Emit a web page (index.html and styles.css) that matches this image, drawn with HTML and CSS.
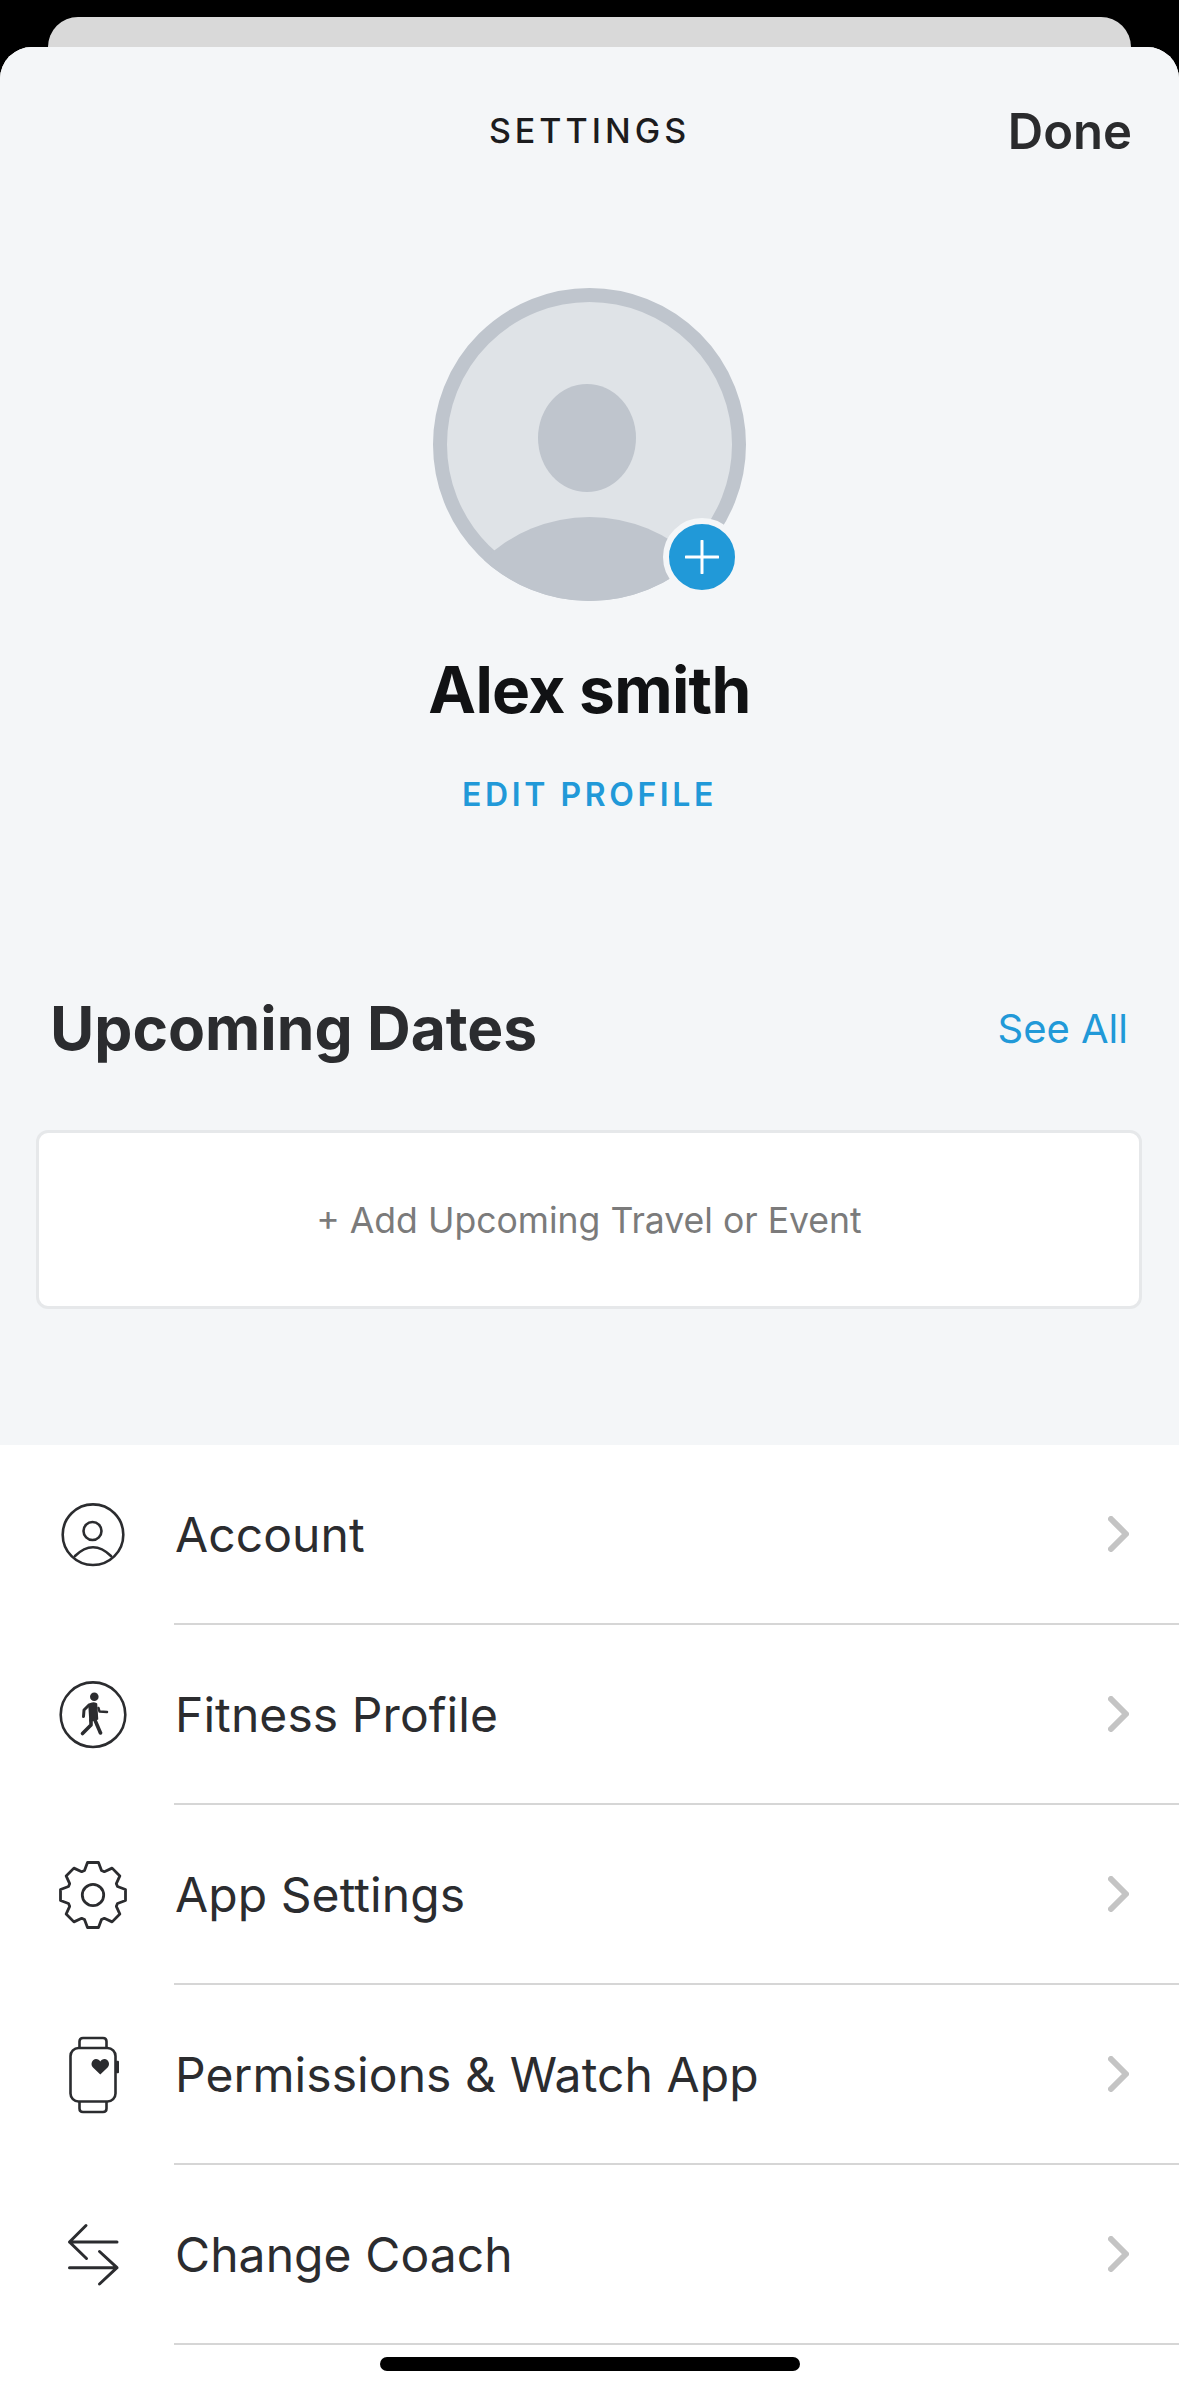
FILE: index.html
```html
<!DOCTYPE html>
<html lang="en">
<head>
  <meta charset="UTF-8" />
  <meta name="viewport" content="width=device-width, initial-scale=1.0"/>
  <title>Settings</title>
  <link rel="stylesheet" href="styles.css">
</head>
<body>
<div class="back-card"></div>
<div class="sheet">
  <div class="top-section">
    <div class="header">
      <div class="title">SETTINGS</div>
      <div class="done">Done</div>
    </div>

    <div class="profile">
      <div class="avatar">
        <svg width="313" height="313" viewBox="0 0 313 313">
          <defs>
            <clipPath id="avatarClip"><circle cx="156.5" cy="156.5" r="156.5"/></clipPath>
          </defs>
          <circle cx="156.5" cy="156.5" r="149.5" fill="#dfe3e7" stroke="#bfc5cd" stroke-width="14"/>
          <ellipse cx="154" cy="150" rx="49" ry="54" fill="#bfc5cd"/>
          <circle cx="156.5" cy="381" r="152" fill="#bfc5cd" clip-path="url(#avatarClip)"/>
        </svg>
        <div class="avatar-badge">
          <svg width="34" height="34" viewBox="0 0 34 34">
            <path d="M17 1V33M1 17H33" stroke="#fff" stroke-width="3" stroke-linecap="round"/>
          </svg>
        </div>
      </div>
      <div class="name">Alex smith</div>
      <div class="edit-link">EDIT PROFILE</div>
    </div>

    <div class="section-head">
      <h2>Upcoming Dates</h2>
      <span class="see-all">See All</span>
    </div>
    <div class="add-card">+ Add Upcoming Travel or Event</div>
  </div>

  <ul class="menu">
    <li class="row">
      <div class="row-icon">
        <svg width="80" height="80" viewBox="0 0 80 80" fill="none" stroke="#2b2c2f" stroke-width="2.6" stroke-linecap="round">
          <circle cx="40" cy="39.7" r="30.3"/>
          <circle cx="39.5" cy="36" r="9"/>
          <path d="M22 61Q40 43.5 58 61"/>
        </svg>
      </div>
      <div class="row-body">
        <span class="row-label">Account</span>
        <svg class="chevron" width="21" height="36" viewBox="0 0 21 36"><path d="M3 3L18 18L3 33" fill="none" stroke="#c4c4c4" stroke-width="6" stroke-linecap="round" stroke-linejoin="round"/></svg>
      </div>
    </li>
    <li class="row">
      <div class="row-icon">
        <svg width="80" height="80" viewBox="0 0 80 80" fill="none" stroke="#2b2c2f" stroke-linecap="round" stroke-linejoin="round">
          <circle cx="40" cy="39.7" r="32.3" stroke-width="2.6"/>
          <circle cx="41.3" cy="21.7" r="4.3" fill="#2b2c2f" stroke="none"/>
          <path d="M36 29.5Q40 27 43.5 29L44.5 44L37 46Z" fill="#2b2c2f" stroke="#2b2c2f" stroke-width="1.5"/>
          <path d="M36 30L31 35L30.5 41.5" stroke-width="3"/>
          <path d="M45.5 33L46.5 36.5L54 37" stroke-width="2.5"/>
          <path d="M41.5 44L47.5 58" stroke-width="3.6"/>
          <path d="M38 45L38 50L29.5 58.5" stroke-width="3.6"/>
        </svg>
      </div>
      <div class="row-body">
        <span class="row-label">Fitness Profile</span>
        <svg class="chevron" width="21" height="36" viewBox="0 0 21 36"><path d="M3 3L18 18L3 33" fill="none" stroke="#c4c4c4" stroke-width="6" stroke-linecap="round" stroke-linejoin="round"/></svg>
      </div>
    </li>
    <li class="row">
      <div class="row-icon">
        <svg width="80" height="80" viewBox="0 0 80 80" fill="none" stroke="#2b2c2f" stroke-width="2.8" stroke-linejoin="round">
          <polygon transform="translate(40 40)" points="24.5,-8.5 32.5,-5.5 32.5,5.5 24.5,8.5 23.33,11.31 26.87,19.09 19.09,26.87 11.31,23.33 8.5,24.5 5.5,32.5 -5.5,32.5 -8.5,24.5 -11.31,23.33 -19.09,26.87 -26.87,19.09 -23.33,11.31 -24.5,8.5 -32.5,5.5 -32.5,-5.5 -24.5,-8.5 -23.33,-11.31 -26.87,-19.09 -19.09,-26.87 -11.31,-23.33 -8.5,-24.5 -5.5,-32.5 5.5,-32.5 8.5,-24.5 11.31,-23.33 19.09,-26.87 26.87,-19.09 23.33,-11.31"/>
          <circle cx="40" cy="40" r="10.7"/>
        </svg>
      </div>
      <div class="row-body">
        <span class="row-label">App Settings</span>
        <svg class="chevron" width="21" height="36" viewBox="0 0 21 36"><path d="M3 3L18 18L3 33" fill="none" stroke="#c4c4c4" stroke-width="6" stroke-linecap="round" stroke-linejoin="round"/></svg>
      </div>
    </li>
    <li class="row">
      <div class="row-icon">
        <svg width="80" height="80" viewBox="0 0 80 80" fill="none" stroke="#2b2c2f" stroke-width="2.6">
          <rect x="17.5" y="13" width="45" height="53.5" rx="8"/>
          <path d="M26.5 13V6.5Q26.5 3 30 3H50Q53.5 3 53.5 6.5V13"/>
          <path d="M26.5 66.5V73.5Q26.5 77 30 77H50Q53.5 77 53.5 73.5V66.5"/>
          <rect x="63" y="25.7" width="3" height="12.6" rx="1" fill="#2b2c2f" stroke="none"/>
          <path d="M47.3 39.5L40 32.5C37 29.5 39 24 43 24C45 24 46.5 25 47.3 26.5C48.1 25 49.6 24 51.6 24C55.6 24 57.6 29.5 54.6 32.5Z" fill="#2b2c2f" stroke="none"/>
        </svg>
      </div>
      <div class="row-body">
        <span class="row-label">Permissions &amp; Watch App</span>
        <svg class="chevron" width="21" height="36" viewBox="0 0 21 36"><path d="M3 3L18 18L3 33" fill="none" stroke="#c4c4c4" stroke-width="6" stroke-linecap="round" stroke-linejoin="round"/></svg>
      </div>
    </li>
    <li class="row">
      <div class="row-icon">
        <svg width="80" height="80" viewBox="0 0 80 80" fill="none" stroke="#2b2c2f" stroke-width="3" stroke-linecap="round" stroke-linejoin="round">
          <path d="M64 27H16.5M33 10.5L16.5 27L33.5 43.5"/>
          <path d="M16.5 52.7H64M46.5 36.5L64 52.7L46.5 69"/>
        </svg>
      </div>
      <div class="row-body">
        <span class="row-label">Change Coach</span>
        <svg class="chevron" width="21" height="36" viewBox="0 0 21 36"><path d="M3 3L18 18L3 33" fill="none" stroke="#c4c4c4" stroke-width="6" stroke-linecap="round" stroke-linejoin="round"/></svg>
      </div>
    </li>
  </ul>
</div>
<div class="home-bar"></div>
</body>
</html>
```

FILE: styles.css
```css
* {
  box-sizing: border-box;
}
html, body {
  margin: 0;
  height: 2396px;
  overflow: hidden;
}
body {
  font-family: Inter, "Noto Sans", sans-serif;
  background: #000;
  position: relative;
}
.back-card {
  height: 30px;
  margin: 17px 48px 0;
  background: #d9d9d9;
  border-radius: 30px 30px 0 0;
}
.sheet {
  height: 2349px;
  background: #fff;
  border-radius: 32px 32px 0 0;
  overflow: hidden;
}
.top-section {
  height: 1398px;
  background: #f4f6f8;
}
.header {
  display: flex;
  justify-content: flex-end;
  align-items: center;
  position: relative;
  height: 80px;
  padding: 44px 47px 0 0;
  box-sizing: content-box;
}
.title {
  position: absolute;
  left: 0;
  right: 0;
  top: 44px;
  line-height: 80px;
  text-align: center;
  font-size: 34px;
  font-weight: 500;
  letter-spacing: 4px;
  color: #1c1c1e;
}
.done {
  font-size: 49px;
  font-weight: 600;
  color: #2a2b2d;
}
.profile {
  display: flex;
  flex-direction: column;
  align-items: center;
  padding-top: 117px;
}
.avatar {
  position: relative;
  width: 313px;
  height: 313px;
}
.avatar svg {
  display: block;
}
.avatar-badge {
  position: absolute;
  left: 230px;
  top: 230px;
  width: 78px;
  height: 78px;
  display: flex;
  align-items: center;
  justify-content: center;
  background: #2199d8;
  border: 6px solid #f4f6f8;
  border-radius: 50%;
}
.name {
  margin-top: 50px;
  font-size: 64px;
  font-weight: 700;
  line-height: 78px;
  letter-spacing: -0.7px;
  color: #111214;
}
.edit-link {
  margin-top: 46px;
  font-size: 32px;
  font-weight: 600;
  line-height: 40px;
  letter-spacing: 3.6px;
  color: #2199d8;
}
.section-head {
  display: flex;
  justify-content: space-between;
  align-items: center;
  margin-top: 178px;
  padding: 0 51px 0 50px;
}
.section-head h2 {
  margin: 0;
  font-size: 60.5px;
  font-weight: 700;
  line-height: 70px;
  color: #2b2c2f;
}
.see-all {
  font-size: 40px;
  color: #2199d8;
}
.add-card {
  display: flex;
  align-items: center;
  justify-content: center;
  height: 179px;
  margin: 67px 37px 0 36px;
  padding-top: 2px;
  background: #fff;
  border: 3px solid #e6e8ea;
  border-radius: 12px;
  font-size: 35.6px;
  color: #7b7b7b;
}
.menu {
  list-style: none;
  margin: 0;
  padding: 0;
}
.row {
  display: flex;
  height: 180px;
}
.row-icon {
  flex: 0 0 174px;
  display: flex;
  align-items: center;
  padding-left: 53px;
}
.row-body {
  flex: 1;
  display: flex;
  align-items: center;
  justify-content: space-between;
  padding-right: 50px;
  border-bottom: 2px solid #d6d6d6;
  font-size: 48px;
  color: #2b2c2f;
}
.row-label {
  padding-left: 1px;
  letter-spacing: 0.08px;
}
.home-bar {
  position: absolute;
  left: 380px;
  top: 2357px;
  width: 420px;
  height: 14px;
  background: #000;
  border-radius: 7px;
}
```
